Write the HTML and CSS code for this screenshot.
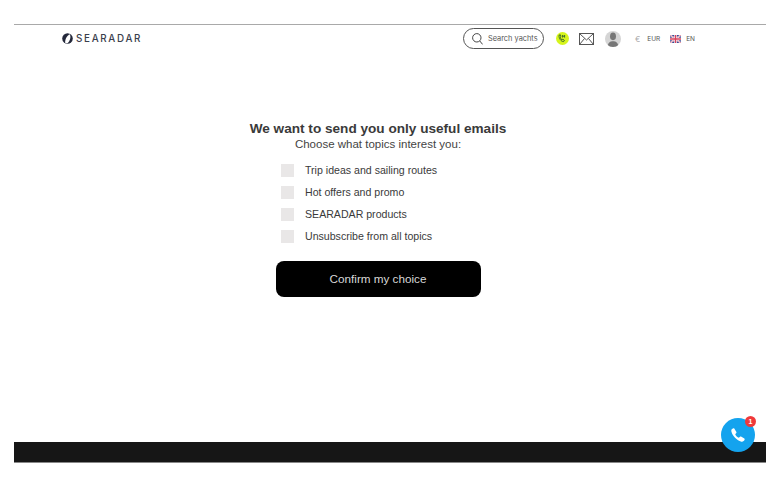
FILE: index.html
```html
<!DOCTYPE html>
<html lang="en">
<head>
  <meta charset="UTF-8">
  <meta name="viewport" content="width=device-width, initial-scale=1">
  <title>Searadar - Email topics</title>
  <link rel="stylesheet" href="styles.css">
</head>
<body>

<div class="page">
  <header class="header">
    <a class="logo" href="#">
      <svg class="logo-mark" width="11" height="11" viewBox="0 0 10 10">
        <circle cx="5" cy="5" r="4.800" fill="#23283a"/>
        <path d="M3 9.400C2.400 6.600 4 2.800 7 1.200 8.400 3.400 7.400 7.400 5 9.400z" fill="#fff"/>
      </svg>
      <span>SEARADAR</span>
    </a>
    <div class="header-right">
      <div class="search">
        <svg width="11" height="12" viewBox="0 0 11 12" fill="none" stroke="#444" stroke-width="1">
          <circle cx="4.800" cy="4.800" r="4.200"/>
          <path d="M7.800 8L10.600 11.400"/>
        </svg>
        <span>Search yachts</span>
      </div>
      <div class="phone-dot">
        <svg width="8" height="9" viewBox="0 0 8 9" fill="none" stroke="#3c6a2a" stroke-width="1">
          <path d="M1 1.200L2.400.8 3 2.600 2.200 3.200C2.400 4.400 3 5.200 4 5.800L4.800 5.200 6.400 6.400 5.600 7.600C3 7.600.8 4.400 1 1.200z"/>
          <path d="M4.600 1V3.600M6.600 1V3.600M4.600 2.200H6.600"/>
        </svg>
      </div>
      <svg class="mail" width="15" height="12" viewBox="0 0 15 12" fill="none" stroke="#555" stroke-width="1">
        <rect x=".5" y=".5" width="14" height="11"/>
        <path d="M.5.5L7.500 7 14.500.5M.5 11.500L5.500 5.500M14.500 11.500L9.500 5.500"/>
      </svg>
      <div class="avatar">
        <svg width="16" height="16" viewBox="0 0 15 15" fill="#777">
          <ellipse cx="7.500" cy="5" rx="2.800" ry="3.600"/>
          <path d="M2.500 15C2.500 10.500 5 9.500 7.500 9.500s5 1 5 5.500z"/>
        </svg>
      </div>
      <div class="currency"><span class="euro">€</span>EUR</div>
      <div class="lang">
        <svg width="11" height="8" viewBox="0 0 11 8">
          <rect width="11" height="8" rx="1" fill="#3b4a94"/>
          <path d="M0 0L11 8M11 0L0 8" stroke="#fff" stroke-width="1.600"/>
          <path d="M0 0L11 8M11 0L0 8" stroke="#d8405a" stroke-width=".6"/>
          <path d="M5.500 0V8M0 4H11" stroke="#fff" stroke-width="2.600"/>
          <path d="M5.500 0V8M0 4H11" stroke="#d8405a" stroke-width="1.400"/>
        </svg>
        <span>EN</span>
      </div>
    </div>
  </header>

  <main class="content">
    <h1>We want to send you only useful emails</h1>
    <p class="subtitle">Choose what topics interest you:</p>
    <ul class="topics">
      <li><span class="check"></span>Trip ideas and sailing routes</li>
      <li><span class="check"></span>Hot offers and promo</li>
      <li><span class="check"></span>SEARADAR products</li>
      <li><span class="check"></span>Unsubscribe from all topics</li>
    </ul>
    <button class="confirm">Confirm my choice</button>
  </main>

  <footer class="footer"></footer>
</div>

<div class="call">
  <svg width="16" height="16" viewBox="0 0 24 24" fill="#fff">
    <path d="M6.600 2.500l3 5c.300.500.200 1.100-.200 1.500L7.800 10.700c1.200 2.500 3 4.300 5.500 5.500l1.700-1.600c.400-.400 1-.500 1.500-.200l5 3c.500.300.700 .900.500 1.400-.800 2.200-2.700 3.700-5 3.200C10.500 20.500 3.500 13.500 2 6.500 1.500 4.200 3 2.800 5.200 2c.500-.200 1.100 0 1.400.500z"/>
  </svg>
  <span class="badge">1</span>
</div>

</body>
</html>
```

FILE: styles.css
```css
* {
  box-sizing: border-box;
}
body {
  font-family: 'Liberation Sans', Arial, sans-serif;
  background: #fff;
  margin: 0;
  height: 477px;
  overflow: hidden;
}
.page {
  margin: 24px 8px 0 14px;
  height: 439px;
  border-top: 1px solid #a9a9a9;
  display: flex;
  flex-direction: column;
}
.header {
  height: 27px;
  padding: 0 71px 0 48px;
  display: flex;
  align-items: center;
  justify-content: space-between;
}
.logo {
  display: flex;
  align-items: center;
  gap: 3px;
  font-family: Inter, sans-serif;
  font-size: 9.800px;
  font-weight: 500;
  letter-spacing: 1.700px;
  color: #3a3e4c;
  text-decoration: none;
}
.header-right {
  display: flex;
  align-items: center;
  font-family: Inter, sans-serif;
  font-size: 6.500px;
  color: #555;
}
.search {
  width: 81px;
  height: 21px;
  border: 1px solid #555;
  border-radius: 11px;
  display: flex;
  align-items: center;
  gap: 5px;
  padding-left: 8px;
  font-size: 7.400px;
  margin-right: 12px;
}
.phone-dot {
  width: 13px;
  height: 13px;
  border-radius: 50%;
  background: #d6f51c;
  display: flex;
  align-items: center;
  justify-content: center;
  margin-right: 10px;
}
.mail {
  margin-right: 11px;
}
.avatar {
  width: 16px;
  height: 16px;
  border-radius: 50%;
  background: #d5d5d5;
  overflow: hidden;
  margin-right: 14px;
}
.currency {
  display: flex;
  align-items: center;
  margin-right: 10px;
}
.euro {
  color: #aaa;
  font-size: 8px;
  margin-right: 7px;
}
.lang {
  display: flex;
  align-items: center;
  gap: 5px;
}
.content {
  flex: 1;
  padding: 69px 24px 0 0;
  display: flex;
  flex-direction: column;
  align-items: center;
}
h1 {
  margin: 0;
  font-size: 13.600px;
  line-height: 16px;
  font-weight: 700;
  color: #3a3a3a;
}
.subtitle {
  margin: 0;
  font-size: 11.500px;
  line-height: 15px;
  color: #444;
}
.topics {
  list-style: none;
  margin: 7px 0 0 262px;
  padding: 0 0 0 5px;
  align-self: flex-start;
}
.topics li {
  height: 22px;
  display: flex;
  align-items: center;
  gap: 11px;
  font-size: 10.600px;
  color: #3a3a3a;
}
.check {
  width: 13px;
  height: 13px;
  background: #e9e7e7;
}
.confirm {
  width: 205px;
  height: 36px;
  margin-top: 14px;
  background: #000;
  color: #d8d8d8;
  border: none;
  border-radius: 8px;
  font-family: inherit;
  font-size: 11.700px;
  padding-bottom: 2px;
}
.footer {
  height: 21px;
  background: #161616;
  border-bottom: 1px solid #888;
}
.call {
  position: fixed;
  left: 721px;
  top: 418px;
  width: 34px;
  height: 34px;
  border-radius: 50%;
  background: #14a3ee;
  display: flex;
  align-items: center;
  justify-content: center;
}
.badge {
  position: absolute;
  right: -1px;
  top: -2px;
  width: 11px;
  height: 11px;
  border-radius: 50%;
  background: #f0393a;
  color: #fff;
  font-size: 7px;
  font-weight: 700;
  line-height: 11px;
  text-align: center;
}
```
